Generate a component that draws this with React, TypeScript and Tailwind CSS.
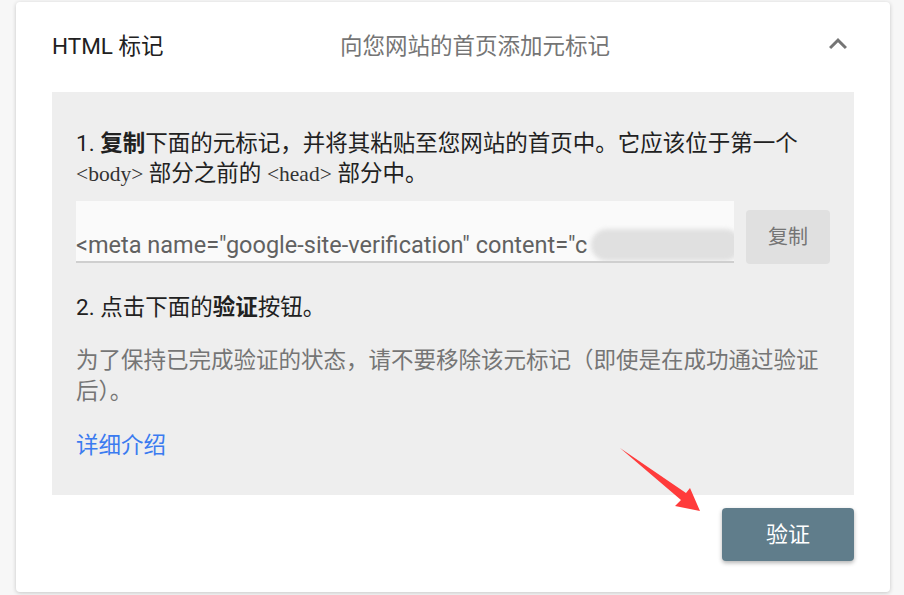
import { ReactNode } from "react";

function Tag({ children }: { children: ReactNode }) {
  return (
    <span className="font-['Liberation_Serif','Noto_Sans_CJK_SC',serif] text-[21.5px] text-[#333]">
      {children}
    </span>
  );
}

export default function App() {
  return (
    <div className="min-h-screen bg-[#f7f7f7] pl-[16px] pt-[2px] font-['Roboto','Noto_Sans_CJK_SC',sans-serif]">
      <div className="relative flex h-[590px] w-[874px] flex-col rounded-[4px] bg-white px-[36px] shadow-[0_1px_4px_rgba(0,0,0,0.2)]">
        {/* header */}
        <div className="flex h-[90px] items-center">
          <div className="w-[288px] text-[22.5px] text-[#212121]">HTML 标记</div>
          <div className="flex-1 text-[22.5px] text-[#757575]">向您网站的首页添加元标记</div>
          <svg width="36" height="36" viewBox="0 0 24 24" className="mr-[-2px] mt-[-6px] fill-[#757575]">
            <path d="M12 8l-6 6 1.41 1.41L12 10.83l4.59 4.58L18 14z" />
          </svg>
        </div>

        {/* gray panel */}
        <div className="flex flex-col bg-[#eeeeee] px-[24px] pb-[35px] pt-[36px] text-[22.5px] leading-[30px] text-[#212121]">
          <p>
            1. <b>复制</b>下面的元标记，并将其粘贴至您网站的首页中。它应该位于第一个 <Tag>&lt;body&gt;</Tag> 部分之前的{" "}
            <Tag>&lt;head&gt;</Tag> 部分中。
          </p>

          <div className="mt-[12px] flex items-start gap-[12px]">
            <div className="relative h-[62px] w-[658px] overflow-hidden border-b-2 border-[#cfcfcf] bg-[#fafafa]">
              <div className="whitespace-nowrap pt-[29px] text-[23.5px] leading-[30px] text-[#616161]">
                &lt;meta name="google-site-verification" content="c
              </div>
              <div className="absolute left-[515px] top-[28px] h-[32px] w-[150px] rounded-full bg-[#e0e0e0] blur-[2px]" />
            </div>
            <button className="mt-[9px] h-[54px] w-[84px] rounded-[4px] bg-[#e0e0e0] text-[20px] text-[#757575]">
              复制
            </button>
          </div>

          <p className="mt-[28px]">
            2. 点击下面的<b>验证</b>按钮。
          </p>

          <p className="mt-[23px] leading-[31px] text-[#757575]">
            为了保持已完成验证的状态，请不要移除该元标记（即使是在成功通过验证后）。
          </p>

          <a href="#" className="mt-[23px] text-[#3b7bf0]">
            详细介绍
          </a>
        </div>

        <div className="mt-[13px] flex justify-end">
          <button className="h-[53px] w-[132px] rounded-[4px] bg-[#607d8b] text-[22px] text-white shadow-[0_2px_4px_rgba(0,0,0,0.3)]">
            验证
          </button>
        </div>

        {/* annotation arrow */}
        <svg className="pointer-events-none absolute left-[584px] top-[430px]" width="110" height="90" viewBox="600 428 110 90">
          <path d="M620 444 L686 489 L690 484 L700 507 L675 502 L681 496 Z" fill="#ff3b3b" />
        </svg>
      </div>
    </div>
  );
}
